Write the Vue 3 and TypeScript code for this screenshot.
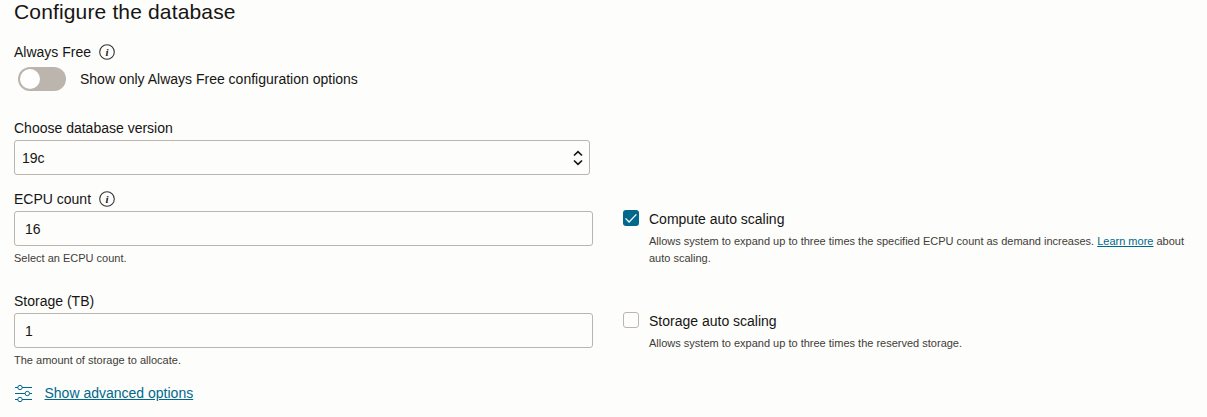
<script setup lang="ts">
import { ref } from 'vue'

const alwaysFree = ref(false)
const version = ref('19c')
const ecpuCount = ref('16')
const storage = ref('1')
const computeScaling = ref(true)
const storageScaling = ref(false)
</script>

<template>
  <main class="panel">
    <h1 class="title">Configure the database</h1>

    <div class="label free-label">
      <span>Always Free</span>
      <svg class="info" viewBox="0 0 16 16">
        <circle cx="8" cy="8" r="7.3" />
        <text x="8" y="11.9">i</text>
      </svg>
    </div>
    <div class="toggle-row">
      <button class="toggle" :class="{ on: alwaysFree }" @click="alwaysFree = !alwaysFree">
        <span class="knob"></span>
      </button>
      <span>Show only Always Free configuration options</span>
    </div>

    <div class="label version-label">Choose database version</div>
    <div class="select">
      <span>{{ version }}</span>
      <svg class="arrows" viewBox="0 0 10 16">
        <path d="M1 5.5 L5 1.7 L9 5.5 M1 10.5 L5 14.3 L9 10.5" />
      </svg>
    </div>

    <section class="row">
      <div class="field">
        <div class="label">
          <span>ECPU count</span>
          <svg class="info" viewBox="0 0 16 16">
            <circle cx="8" cy="8" r="7.3" />
            <text x="8" y="11.9">i</text>
          </svg>
        </div>
        <input v-model="ecpuCount" class="input" type="text" />
        <p class="hint">Select an ECPU count.</p>
      </div>
      <div class="option">
        <button class="check" :class="{ checked: computeScaling }" @click="computeScaling = !computeScaling">
          <svg v-if="computeScaling" viewBox="0 0 16 16"><path d="M2.5 8.4 L6.1 12 L13.4 4.4" /></svg>
        </button>
        <div>
          <div class="option-name">Compute auto scaling</div>
          <p class="description">
            Allows system to expand up to three times the specified ECPU count as demand increases.
            <a>Learn more</a> about auto scaling.
          </p>
        </div>
      </div>
    </section>

    <section class="row">
      <div class="field">
        <div class="label">Storage (TB)</div>
        <input v-model="storage" class="input" type="text" />
        <p class="hint">The amount of storage to allocate.</p>
      </div>
      <div class="option">
        <button class="check" :class="{ checked: storageScaling }" @click="storageScaling = !storageScaling">
          <svg v-if="storageScaling" viewBox="0 0 16 16"><path d="M2.5 8.4 L6.1 12 L13.4 4.4" /></svg>
        </button>
        <div>
          <div class="option-name">Storage auto scaling</div>
          <p class="description">Allows system to expand up to three times the reserved storage.</p>
        </div>
      </div>
    </section>

    <div class="advanced">
      <svg class="sliders" viewBox="0 0 18 18">
        <path d="M0 3.5H3M7 3.5H17M0 9.5H10M14.5 9.5H17M0 15.5H3M7 15.5H17" />
        <circle cx="5" cy="3.5" r="2.2" />
        <circle cx="12.3" cy="9.5" r="2.2" />
        <circle cx="5" cy="15.5" r="2.2" />
      </svg>
      <a>Show advanced options</a>
    </div>
  </main>
</template>

<style>
body {
  background: #fdfdfb;
}
</style>

<style scoped>
.panel {
  box-sizing: border-box;
  height: 417px;
  padding: 0 14px;
  overflow: hidden;
  background: #fdfdfb;
  color: #161513;
  font: 14px/20px "Liberation Sans", Arial, sans-serif;
}
.title {
  margin: 0;
  font-size: 21px;
  font-weight: 400;
  line-height: 24px;
  letter-spacing: 0.15px;
}
.label {
  display: flex;
  align-items: center;
  gap: 8px;
  height: 20px;
}
.free-label {
  margin-top: 18px;
}
.info {
  width: 16px;
  height: 16px;
}
.info circle {
  fill: none;
  stroke: #333;
  stroke-width: 1.1;
}
.info text {
  fill: #222;
  font: italic bold 11px "Liberation Serif", serif;
  text-anchor: middle;
}
.toggle-row {
  display: flex;
  align-items: center;
  gap: 14px;
  height: 24px;
  margin: 5px 0 0 4px;
}
.toggle {
  display: flex;
  align-items: center;
  width: 48px;
  height: 24px;
  padding: 0 2px;
  border: 0;
  border-radius: 12px;
  background: #bbb5ae;
}
.toggle.on {
  justify-content: flex-end;
  background: #00688c;
}
.knob {
  width: 20px;
  height: 20px;
  border-radius: 50%;
  background: #fff;
}
.version-label {
  margin-top: 27px;
}
.select {
  display: flex;
  box-sizing: border-box;
  align-items: center;
  justify-content: space-between;
  width: 576px;
  height: 35px;
  margin-top: 2px;
  padding: 1px 6px 0 7px;
  border: 1px solid #bbb5ae;
  border-radius: 3px;
}
.arrows {
  width: 10px;
  height: 16px;
}
.arrows path {
  fill: none;
  stroke: #161513;
  stroke-width: 1.7;
}
.row {
  display: flex;
  gap: 30px;
  height: 88px;
  margin-top: 14px;
}
.field {
  width: 579px;
}
.input {
  display: block;
  box-sizing: border-box;
  width: 579px;
  height: 35px;
  margin: 2px 0 0;
  padding: 1px 10px 0;
  border: 1px solid #bbb5ae;
  border-radius: 3px;
  outline: 0;
  background: transparent;
  color: inherit;
  font: inherit;
}
.hint,
.description {
  margin: 0;
  color: #403c38;
  font-size: 11px;
  line-height: 17px;
}
.hint {
  margin-top: 4px;
}
.option {
  display: flex;
  gap: 10px;
  padding-top: 20px;
}
.check {
  flex: none;
  width: 16px;
  height: 16px;
  margin-top: 1px;
  padding: 0;
  border: 1px solid #bbb5ae;
  border-radius: 3px;
  background: transparent;
}
.check.checked {
  border: 0;
  background: #00688c;
}
.check svg {
  display: block;
}
.check path {
  fill: none;
  stroke: #fff;
  stroke-width: 1.3;
}
.option-name {
  height: 20px;
}
.description {
  width: 545px;
  margin-top: 4px;
}
a {
  color: #00688c;
  text-decoration: underline;
}
.advanced {
  display: flex;
  align-items: center;
  gap: 11.5px;
  height: 20px;
  margin-top: 4px;
  padding-left: 1px;
}
.sliders {
  width: 18px;
  height: 18px;
}
.sliders path,
.sliders circle {
  fill: none;
  stroke: #00688c;
}
</style>
